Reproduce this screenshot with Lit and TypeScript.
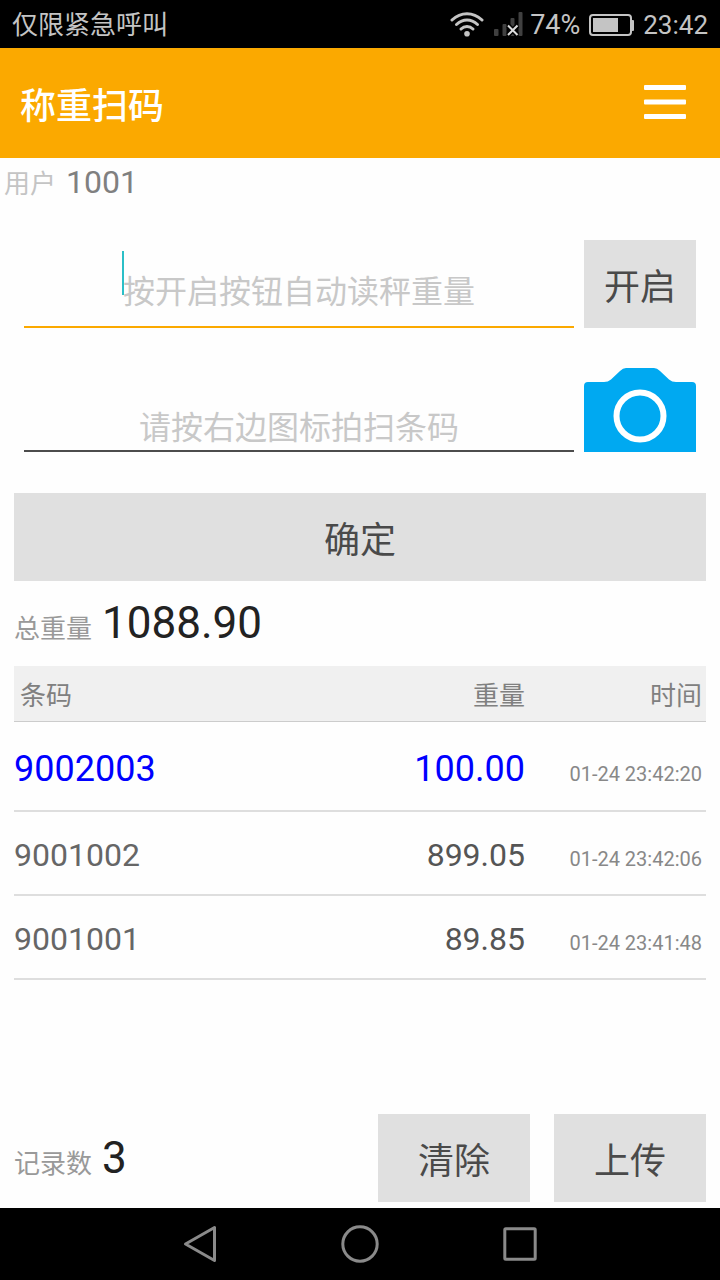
import { LitElement, html, css, svg } from "lit";
import { customElement, property, state } from "lit/decorators.js";
import { classMap } from "lit/directives/class-map.js";

interface WeighRecord {
  code: string;
  weight: string;
  time: string;
}

@customElement("status-bar")
class StatusBar extends LitElement {
  @property() carrier = "";
  @property() battery = "";
  @property() time = "";

  static styles = css`
    :host {
      box-sizing: border-box;
      display: flex;
      align-items: center;
      height: 48px;
      padding: 2px 12px 0;
      background: #000;
      color: #c4c4c4;
      font-size: 26px;
      line-height: 32px;
    }
    .carrier {
      flex: 1;
    }
    .wifi {
      margin-right: 10px;
    }
    .signal {
      margin-right: 7px;
    }
    .percent {
      font-size: 27px;
    }
    .battery {
      margin: 0 9px;
    }
    svg {
      display: block;
    }
  `;

  render() {
    return html`
      <span class="carrier">${this.carrier}</span>
      <svg class="wifi" width="34" height="26" viewBox="0 0 34 26" fill="none" stroke="#c4c4c4" stroke-width="3" stroke-linecap="round">
        <path d="M2 8C11 -0.500 23 -0.500 32 8" />
        <path d="M6.500 12.500C13 6.500 21 6.500 27.500 12.500" />
        <path d="M11 17C14.500 13.700 19.500 13.700 23 17" />
        <circle cx="17" cy="21.800" r="2.800" fill="#c4c4c4" stroke="none" />
      </svg>
      <svg class="signal" width="29" height="26" viewBox="0 1 29 26">
        <g fill="#404040">
          <rect x="0" y="18" width="4.500" height="7" rx="1" />
          <rect x="8.500" y="13" width="4" height="12" rx="1" />
          <rect x="16.500" y="7" width="4" height="18" rx="1" />
          <rect x="24.500" y="1" width="4" height="24" rx="1" />
        </g>
        <path d="M14 14.500L23.500 24M23.500 14.500L14 24" stroke="#000" stroke-width="5" />
        <path d="M14 14.500L23.500 24M23.500 14.500L14 24" stroke="#dcdcdc" stroke-width="2" />
      </svg>
      <span class="percent">${this.battery}</span>
      <svg class="battery" width="45" height="24" viewBox="0 0 45 24">
        <rect x="1" y="2" width="41" height="20" rx="3" fill="none" stroke="#c4c4c4" stroke-width="2" />
        <rect x="4" y="5" width="25" height="14" fill="#c4c4c4" />
        <rect x="42.500" y="7" width="2.500" height="11" rx="1" fill="#c4c4c4" />
      </svg>
      <time>${this.time}</time>
    `;
  }
}

@customElement("nav-keys")
class NavKeys extends LitElement {
  static styles = css`
    :host {
      display: flex;
      align-items: center;
      justify-content: center;
      gap: 120px;
      height: 72px;
      background: #000;
    }
    .key {
      display: block;
      padding: 0;
      border: 0;
      background: none;
    }
    svg {
      display: block;
    }
  `;

  private key(label: string, shape: unknown) {
    return html`<button class="key" type="button" aria-label=${label}>
      <svg width="40" height="40" viewBox="0 0 40 40" fill="none" stroke="#8a8a8a" stroke-width="3" stroke-linejoin="round">${shape}</svg>
    </button>`;
  }

  render() {
    return html`
      ${this.key("返回", svg`<path d="M5.500 20L34.500 3.500V36.500Z" />`)}
      ${this.key("主页", svg`<circle cx="20" cy="20" r="17.200" />`)}
      ${this.key("最近任务", svg`<rect x="4.800" y="4.800" width="30.400" height="30.400" rx="1" />`)}
    `;
  }
}

@customElement("app-root")
class AppRoot extends LitElement {
  @state() private records: WeighRecord[] = [
    { code: "9002003", weight: "100.00", time: "01-24 23:42:20" },
    { code: "9001002", weight: "899.05", time: "01-24 23:42:06" },
    { code: "9001001", weight: "89.85", time: "01-24 23:41:48" },
  ];

  static styles = css`
    :host {
      display: flex;
      flex-direction: column;
      min-height: 100vh;
      background: #fefefe;
      font-family: Roboto, "Noto Sans CJK SC", sans-serif;
    }
    button {
      font-family: inherit;
      border: 0;
      margin: 0;
      padding: 0;
    }
    svg {
      display: block;
    }
    .appbar {
      display: flex;
      align-items: center;
      justify-content: space-between;
      height: 110px;
      padding: 0 32px 0 20px;
      background: #fba900;
      color: #fff;
    }
    .title {
      margin: 0;
      padding-top: 8px;
      font-size: 36px;
      line-height: 44px;
      font-weight: 500;
    }
    .menu {
      background: none;
    }
    .user {
      display: flex;
      align-items: baseline;
      gap: 10px;
      padding: 4px 4px 0;
      line-height: 40px;
      font-size: 26px;
      color: #c4c4c4;
    }
    .user-id {
      font-size: 32px;
      color: #808080;
    }
    .form {
      display: grid;
      grid-template-columns: 1fr 112px;
      column-gap: 10px;
      row-gap: 36px;
      padding: 36px 24px 0;
    }
    .field {
      position: relative;
      display: flex;
    }
    .input {
      flex: 1;
      min-width: 0;
      box-sizing: border-box;
      height: 88px;
      padding: 18px 0 0;
      border: 0;
      border-bottom: 2px solid #4c4c4c;
      border-radius: 0;
      outline: 0;
      background: none;
      font-family: inherit;
      font-size: 32px;
      text-align: center;
      color: #4c4c4c;
    }
    .input.low {
      padding-top: 42px;
    }
    .input.active {
      border-color: #fba900;
    }
    .input::placeholder {
      color: #c8c8c8;
      opacity: 1;
    }
    .caret {
      position: absolute;
      top: 11px;
      left: calc(50% - 177px);
      width: 2px;
      height: 44px;
      background: #2bbfc7;
    }
    .camera {
      align-self: end;
      background: none;
    }
    .btn {
      height: 88px;
      font-size: 36px;
      color: #4a4a4a;
      background: #e0e0e0;
    }
    .body {
      flex: 1;
      display: flex;
      flex-direction: column;
      padding: 41px 14px 6px;
    }
    .stat {
      display: flex;
      align-items: baseline;
      gap: 10px;
      font-size: 26px;
      line-height: 52px;
      color: #999;
    }
    .stat-value {
      font-size: 44px;
      color: #222;
    }
    .total {
      padding: 16px 0 11px;
    }
    .table {
      width: 100%;
      border-collapse: separate;
      border-spacing: 0;
      table-layout: fixed;
    }
    .table th {
      height: 55px;
      padding: 0;
      background: #f0f0f0;
      border-bottom: 1px solid #ccc;
      font-size: 26px;
      font-weight: 400;
      color: #808080;
      text-align: right;
    }
    .table .head-code {
      padding-left: 6px;
      text-align: left;
    }
    .table td {
      box-sizing: border-box;
      height: 84px;
      padding: 23px 0 0;
      border-bottom: 2px solid #dedede;
      vertical-align: baseline;
      font-size: 32px;
      line-height: 40px;
      color: #555;
      text-align: right;
    }
    .table .code {
      text-align: left;
      color: #666;
    }
    .table .latest td {
      height: 90px;
      padding-top: 27px;
    }
    .table .latest .code,
    .table .latest .weight {
      font-size: 36px;
      color: #00f;
    }
    .table .col-time {
      width: 177px;
      padding-right: 4px;
    }
    .table td.time {
      box-sizing: border-box;
      padding-right: 4px;
      font-size: 20px;
      color: #888;
    }
    .footer {
      display: flex;
      align-items: center;
      gap: 24px;
      margin-top: auto;
    }
    .count {
      flex: 1;
      padding-top: 5px;
    }
    .footer .btn {
      width: 152px;
    }
  `;

  private get total() {
    return this.records.reduce((sum, r) => sum + Number(r.weight), 0).toFixed(2);
  }

  render() {
    return html`
      <status-bar carrier="仅限紧急呼叫" battery="74%" time="23:42"></status-bar>
      <header class="appbar">
        <h1 class="title">称重扫码</h1>
        <button class="menu" type="button" aria-label="菜单">
          <svg width="46" height="40" viewBox="0 0 46 40" fill="#fff">
            <rect x="2" y="2" width="42" height="5" rx="1" />
            <rect x="2" y="16.500" width="42" height="5" rx="1" />
            <rect x="2" y="31" width="42" height="5" rx="1" />
          </svg>
        </button>
      </header>
      <div class="user"><span>用户</span><span class="user-id">1001</span></div>
      <div class="form">
        <div class="field">
          <input class="input active" type="text" aria-label="重量" placeholder="按开启按钮自动读秤重量" />
          <span class="caret"></span>
        </div>
        <button class="btn" type="button">开启</button>
        <div class="field">
          <input class="input low" type="text" aria-label="条码" placeholder="请按右边图标拍扫条码" />
        </div>
        <button class="camera" type="button" aria-label="拍扫条码">
          <svg width="112" height="84" viewBox="0 0 112 84">
            <path fill="#00a9f1" d="M0 84V18Q0 14 4 14H20Q24 14 27 11.500L36 3Q39 0 42 0H70Q73 0 76 3L85 11.500Q88 14 92 14H108Q112 14 112 18V84Z" />
            <circle cx="56" cy="48" r="23.500" fill="none" stroke="#fff" stroke-width="6" />
          </svg>
        </button>
      </div>
      <main class="body">
        <button class="btn" type="button">确定</button>
        <div class="stat total"><span>总重量</span><span class="stat-value">${this.total}</span></div>
        <table class="table">
          <thead>
            <tr>
              <th class="head-code" scope="col">条码</th>
              <th scope="col">重量</th>
              <th class="col-time" scope="col">时间</th>
            </tr>
          </thead>
          <tbody>
            ${this.records.map(
              (r, i) => html`<tr class=${classMap({ latest: i === 0 })}>
                <td class="code">${r.code}</td>
                <td class="weight">${r.weight}</td>
                <td class="time">${r.time}</td>
              </tr>`
            )}
          </tbody>
        </table>
        <footer class="footer">
          <div class="stat count"><span>记录数</span><span class="stat-value">${this.records.length}</span></div>
          <button class="btn" type="button">清除</button>
          <button class="btn" type="button">上传</button>
        </footer>
      </main>
      <nav-keys></nav-keys>
    `;
  }
}
